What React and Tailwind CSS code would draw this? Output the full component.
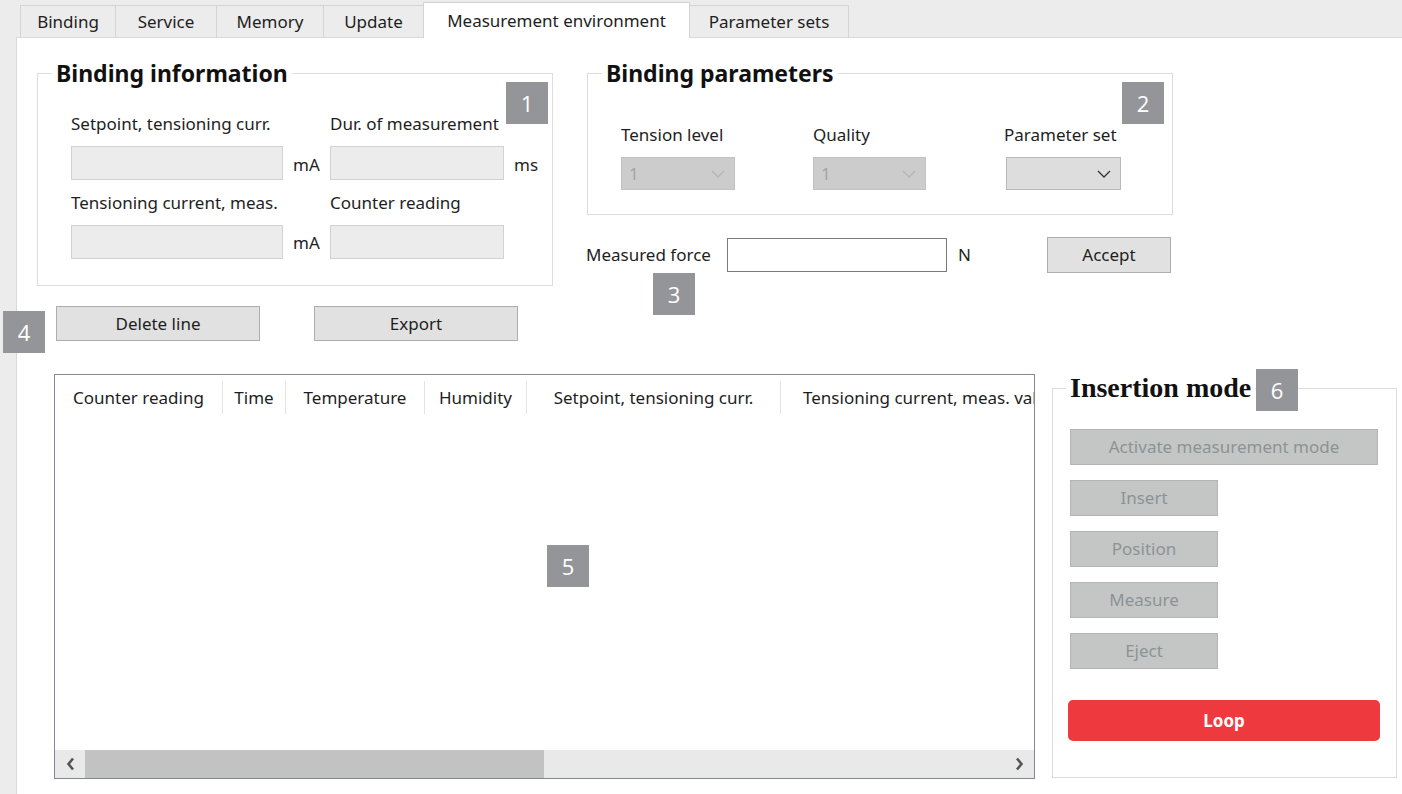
import React from "react";

const tabs = [
  { label: "Binding", cls: "w-[95px] h-[32px] border-t border-l border-[#d4d4d4] bg-[#ececec]" },
  { label: "Service", cls: "w-[101px] h-[32px] border-t border-l border-[#d4d4d4] bg-[#ececec]" },
  { label: "Memory", cls: "w-[107px] h-[32px] border-t border-l border-[#d4d4d4] bg-[#ececec]" },
  { label: "Update", cls: "w-[100px] h-[32px] border-t border-l border-[#d4d4d4] bg-[#ececec]" },
  {
    label: "Measurement environment",
    cls: "relative z-10 -mb-px w-[267px] h-[36px] border-t border-l border-r border-[#d4d4d4] bg-white",
  },
  { label: "Parameter sets", cls: "w-[159px] h-[32px] border-t border-r border-[#d4d4d4] bg-[#ececec]" },
];

const Badge = ({ n, pos }) => (
  <div
    className={`absolute z-20 flex h-[42px] w-[42px] items-center justify-center bg-[#949599] font-['Open_Sans',sans-serif] text-[22px] text-white ${pos}`}
  >
    {n}
  </div>
);

const Chevron = ({ color }) => (
  <svg width="14" height="8" viewBox="0 0 14 8" fill="none">
    <polyline points="1,1 7,7 13,1" stroke={color} strokeWidth="1.3" />
  </svg>
);

const Arrow = ({ dir }) => (
  <svg width="9" height="14" viewBox="0 0 9 14" fill="none">
    <polyline
      points={dir === "left" ? "7,1.5 2.5,7 7,12.5" : "2,1.5 6.5,7 2,12.5"}
      stroke="#555555"
      strokeWidth="2.6"
    />
  </svg>
);

const Combo = ({ value, enabled, width }) => (
  <div
    className={`flex h-[33px] items-center justify-between border pl-[7px] pr-[9px] ${width} ${
      enabled ? "bg-[#dddddd] border-[#b9b9b9]" : "bg-[#cccccc] border-[#c2c2c2] text-[#a3a3a3]"
    }`}
  >
    <span>{value}</span>
    <Chevron color={enabled ? "#333333" : "#b5b5b5"} />
  </div>
);

const GrayInput = ({ width }) => <div className={`h-[34px] border border-[#d2d2d2] bg-[#ececec] ${width}`} />;

const PlainButton = ({ label, cls }) => (
  <div className={`flex h-[35px] items-center justify-center border border-[#adadad] bg-[#e1e1e1] ${cls}`}>
    {label}
  </div>
);

const DisabledButton = ({ label, width }) => (
  <div
    className={`flex h-[36px] items-center justify-center border border-[#b3b5b4] bg-[#c4c6c5] text-[#8c9396] ${width}`}
  >
    {label}
  </div>
);

const columns = [
  { label: "Counter reading", cls: "w-[168px] border-r justify-center" },
  { label: "Time", cls: "w-[63px] border-r justify-center" },
  { label: "Temperature", cls: "w-[139px] border-r justify-center" },
  { label: "Humidity", cls: "w-[102px] border-r justify-center" },
  { label: "Setpoint, tensioning curr.", cls: "w-[254px] border-r justify-center" },
  // last column runs past the visible area and is cut by the grid's edge
  { label: "Tensioning current, meas. value", cls: "w-[330px] pl-[22px]" },
];

export default function App() {
  return (
    <div className="relative h-[794px] w-[1402px] overflow-hidden bg-[#ececec] font-['Noto_Sans',sans-serif] text-[17px] text-[#1e1e1e]">
      {/* tab strip */}
      <div className="flex h-[37px] items-end pl-[20px]">
        {tabs.map((t) => (
          <div key={t.label} className={`flex shrink-0 items-center justify-center whitespace-nowrap ${t.cls}`}>
            {t.label}
          </div>
        ))}
      </div>

      {/* page */}
      <div className="h-[757px] ml-[16px] border-l border-t border-[#d9d9d9] bg-white">
        <div className="mt-[21px] flex items-start">
          {/* left column */}
          <div className="ml-[20px] flex flex-col">
            <fieldset className="w-[516px] border border-[#dcdcdc]">
              <legend className="ml-[14px] px-[4px] text-[23px] font-bold leading-[28px] text-[#111]">
                Binding information
              </legend>
              <div className="grid grid-cols-[212px_47px_174px_auto] pl-[33px] pt-[25px] pb-[26px] leading-[24px]">
                <div className="col-span-2 whitespace-nowrap">Setpoint, tensioning curr.</div>
                <div className="col-span-2 whitespace-nowrap">Dur. of measurement</div>

                <div className="col-span-4 mt-[10px] mb-[11px] flex items-center">
                  <GrayInput width="w-[212px]" />
                  <span className="w-[47px] pl-[10px] pt-[3px]">mA</span>
                  <GrayInput width="w-[174px]" />
                  <span className="pl-[10px] pt-[3px]">ms</span>
                </div>

                <div className="col-span-2 whitespace-nowrap">Tensioning current, meas.</div>
                <div className="col-span-2 whitespace-nowrap">Counter reading</div>

                <div className="col-span-4 mt-[10px] flex items-center">
                  <GrayInput width="w-[212px]" />
                  <span className="w-[47px] pl-[10px] pt-[2px]">mA</span>
                  <GrayInput width="w-[174px]" />
                </div>
              </div>
            </fieldset>

            <div className="mt-[20px] ml-[19px] flex gap-[54px]">
              <PlainButton label="Delete line" cls="w-[204px]" />
              <PlainButton label="Export" cls="w-[204px]" />
            </div>
          </div>

          {/* right column */}
          <div className="ml-[34px] flex flex-col">
            <fieldset className="w-[586px] border border-[#dcdcdc]">
              <legend className="ml-[14px] px-[4px] text-[23px] font-bold leading-[28px] text-[#111]">
                Binding parameters
              </legend>
              <div className="grid grid-cols-[192px_191px_auto] pl-[33px] pt-[36px] pb-[24px] leading-[24px]">
                <div>Tension level</div>
                <div>Quality</div>
                <div>Parameter set</div>
                <div className="mt-[10px]">
                  <Combo value="1" width="w-[114px]" />
                </div>
                <div className="mt-[10px]">
                  <Combo value="1" width="w-[113px]" />
                </div>
                <div className="mt-[10px] pl-[2px]">
                  <Combo value="" enabled width="w-[115px]" />
                </div>
              </div>
            </fieldset>

            <div className="mt-[22px] flex h-[36px] items-center">
              <span className="-ml-px whitespace-nowrap">Measured force</span>
              <div className="ml-[16px] h-[34px] w-[220px] border border-[#7a7a7a] bg-white" />
              <span className="ml-[11px]">N</span>
              <div className="ml-auto mr-[2px] flex h-[36px] w-[124px] items-center justify-center border border-[#adadad] bg-[#e1e1e1]">
                Accept
              </div>
            </div>
          </div>
        </div>

        {/* lower section */}
        <div className="mt-[31px] flex items-start">
          <div className="ml-[37px] mt-[2px] flex h-[405px] w-[981px] flex-col overflow-hidden border border-[#828790] bg-white">
            <div className="flex shrink-0 pt-[6px]">
              {columns.map((c) => (
                <div
                  key={c.label}
                  className={`flex h-[33px] shrink-0 items-center overflow-hidden whitespace-nowrap border-[#e3e3e3] ${c.cls}`}
                >
                  {c.label}
                </div>
              ))}
            </div>
            <div className="flex-1" />
            <div className="flex h-[28px] shrink-0 bg-[#e9e9e9]">
              <div className="flex w-[30px] items-center justify-center">
                <Arrow dir="left" />
              </div>
              <div className="w-[459px] bg-[#c2c2c2]" />
              <div className="flex-1" />
              <div className="flex w-[30px] items-center justify-center">
                <Arrow dir="right" />
              </div>
            </div>
          </div>

          <fieldset className="ml-[17px] h-[406px] w-[345px] border border-[#dcdcdc]">
            <legend className="ml-[13px] px-[4px] font-['Liberation_Serif',serif] text-[28px] font-bold leading-[32px] text-[#111]">
              Insertion mode
            </legend>
            <div className="flex flex-col items-start gap-[15px] pl-[17px] pt-[25px]">
              <DisabledButton label="Activate measurement mode" width="w-[308px]" />
              <DisabledButton label="Insert" width="w-[148px]" />
              <DisabledButton label="Position" width="w-[148px]" />
              <DisabledButton label="Measure" width="w-[148px]" />
              <DisabledButton label="Eject" width="w-[148px]" />
            </div>
            <div className="mt-[31px] pl-[15px]">
              <div className="flex h-[41px] w-[312px] items-center justify-center rounded-[5px] bg-[#ee393f] font-bold text-white">
                Loop
              </div>
            </div>
          </fieldset>
        </div>
      </div>

      <Badge n="1" pos="left-[506px] top-[82px]" />
      <Badge n="2" pos="left-[1122px] top-[82px]" />
      <Badge n="3" pos="left-[653px] top-[273px]" />
      <Badge n="4" pos="left-[3px] top-[311px]" />
      <Badge n="5" pos="left-[547px] top-[545px]" />
      <Badge n="6" pos="left-[1256px] top-[369px]" />
    </div>
  );
}
